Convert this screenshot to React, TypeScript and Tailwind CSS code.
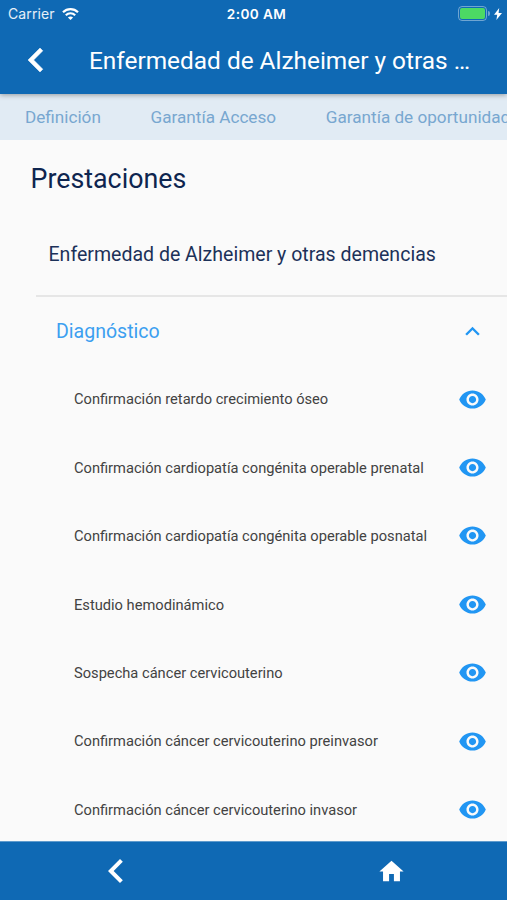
import { useState } from "react";

const TABS = ["Definición", "Garantía Acceso", "Garantía de oportunidad"];

const ITEMS = [
  "Confirmación retardo crecimiento óseo",
  "Confirmación cardiopatía congénita operable prenatal",
  "Confirmación cardiopatía congénita operable posnatal",
  "Estudio hemodinámico",
  "Sospecha cáncer cervicouterino",
  "Confirmación cáncer cervicouterino preinvasor",
  "Confirmación cáncer cervicouterino invasor",
];

type IconProps = {
  d: string;
  className?: string;
};

function Icon({ d, className }: IconProps) {
  return (
    <svg viewBox="0 0 24 24" fill="currentColor" className={className}>
      <path d={d} />
    </svg>
  );
}

const BACK = "M15.41 7.41 14 6l-6 6 6 6 1.41-1.41L10.83 12z";
const EXPAND_LESS = "M12 8l-6 6 1.41 1.41L12 10.83l4.59 4.58L18 14z";
const HOME = "M10 20v-6h4v6h5v-8h3L12 3 2 12h3v8z";
const EYE =
  "M12 4.5C7 4.5 2.73 7.61 1 12c1.73 4.39 6 7.5 11 7.5s9.27-3.11 11-7.5c-1.73-4.39-6-7.5-11-7.5zM12 17c-2.76 0-5-2.24-5-5s2.24-5 5-5 5 2.24 5 5-2.24 5-5 5zm0-8c-1.66 0-3 1.34-3 3s1.34 3 3 3 3-1.34 3-3-1.34-3-3-3z";

function StatusBar() {
  return (
    <div className="grid h-[27px] grid-cols-3 items-center pl-2 pr-[5px] font-[Inter,sans-serif] text-[14px] leading-none">
      <div className="flex items-center gap-[7px]">
        <span className="tracking-[0.1px] text-white/90">Carrier</span>
        <svg viewBox="0 0 17 12" className="h-3 w-[17px]" fill="none" stroke="currentColor" strokeWidth="2.2">
          <path d="M1 4.3C5.2.1 11.8.1 16 4.3" />
          <path d="M3.8 7.2c2.7-2.6 6.7-2.6 9.4 0" />
          <path d="M8.5 12 5.9 9.4c1.5-1.3 3.7-1.3 5.2 0z" fill="currentColor" stroke="none" />
        </svg>
      </div>
      <span className="pl-[3px] pt-[2px] text-center text-[13.6px] font-semibold tracking-[0.4px]">2:00 AM</span>
      <div className="flex items-center justify-end">
        <div className="h-[15px] w-[29px] rounded-[4px] border border-white/40 p-px">
          <div className="h-full w-full rounded-[2px] bg-[#4cd964]" />
        </div>
        <div className="ml-px h-[5px] w-[2px] rounded-r bg-white/40" />
        <svg viewBox="0 0 8 12" className="ml-1 h-3 w-2" fill="currentColor">
          <path d="M5.2 0 0 6.8h3.2L2.4 12 8 5H4.6z" />
        </svg>
      </div>
    </div>
  );
}

export default function App() {
  const [open, setOpen] = useState(true);

  return (
    <div className="flex h-[900px] w-[507px] flex-col overflow-hidden bg-[#fafafa] font-[Roboto,sans-serif]">
      <header className="relative z-10 h-[94px] shrink-0 bg-[#0f69b4] text-white shadow-[0_1px_5px_rgba(0,0,0,0.35)]">
        <StatusBar />
        <div className="flex h-[66px] items-center pl-3">
          <button aria-label="Volver" className="shrink-0">
            <Icon d={BACK} className="size-12 stroke-current stroke-[0.25]" />
          </button>
          <h1 className="ml-[29px] whitespace-nowrap pt-px text-[24.4px] leading-8">
            Enfermedad de Alzheimer y otras …
          </h1>
        </div>
      </header>

      <nav className="flex h-[46px] shrink-0 items-center gap-[49.7px] overflow-hidden whitespace-nowrap bg-[#e1ebf4] pl-[25px] pt-px text-[17.15px] text-[#78a7d0]">
        {TABS.map((tab) => (
          <span key={tab} className="shrink-0">
            {tab}
          </span>
        ))}
      </nav>

      <main className="flex min-h-0 flex-1 flex-col overflow-hidden">
        <h2 className="mt-5 shrink-0 pl-[30.5px] text-[26.8px] leading-[38px] text-[#0e254f]">
          Prestaciones
        </h2>
        <div className="ml-9 flex h-[99px] shrink-0 items-center border-b-2 border-[#e6e6e6] pl-[12.5px] pt-[17px] text-[19.55px] text-[#1c3159]">
          Enfermedad de Alzheimer y otras demencias
        </div>

        <button
          onClick={() => setOpen(!open)}
          className="flex h-[68px] shrink-0 items-center justify-between pl-14 pr-5 text-left text-[19.55px] text-[#3c9ff0]"
        >
          <span className="pt-[2px]">Diagnóstico</span>
          <Icon
            d={EXPAND_LESS}
            className={open ? "size-[29px] text-[#2196f3]" : "size-[29px] rotate-180 text-[#2196f3]"}
          />
        </button>

        {open && (
          <ul className="shrink-0">
            {ITEMS.map((item) => (
              <li
                key={item}
                className="flex h-[68.4px] items-center justify-between pl-[74px] pr-5 text-[14.67px] text-[#424242]"
              >
                <span className="pt-[0.6px]">{item}</span>
                <Icon d={EYE} className="size-[29px] text-[#2196f3]" />
              </li>
            ))}
          </ul>
        )}
      </main>

      <footer className="flex h-[59px] shrink-0 items-center justify-between border-t border-[#5f9bcd] bg-[#0f69b4] pl-[92px] pr-[101px] text-white">
        <button aria-label="Atrás">
          <Icon d={BACK} className="size-12" />
        </button>
        <button aria-label="Inicio">
          <Icon d={HOME} className="size-[29px]" />
        </button>
      </footer>
    </div>
  );
}
